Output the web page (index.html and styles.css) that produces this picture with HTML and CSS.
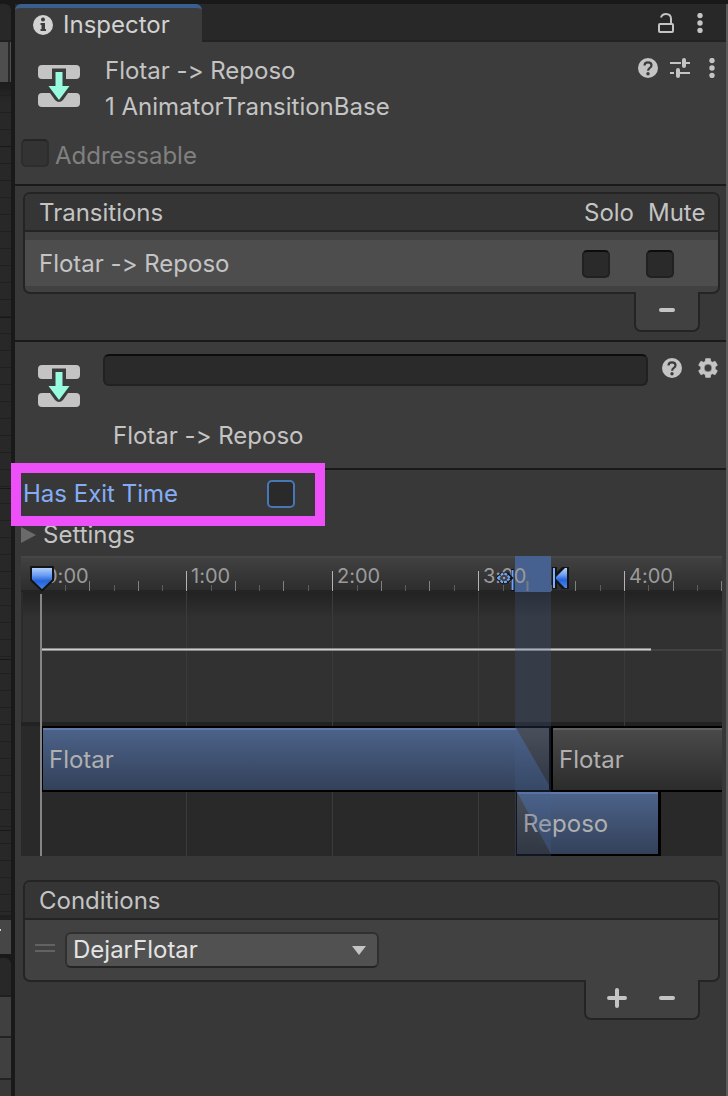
FILE: index.html
```html
<!DOCTYPE html>
<html lang="en">
<head>
<meta charset="utf-8">
<title>Inspector</title>
<link rel="stylesheet" href="styles.css">
</head>
<body>
<svg width="0" height="0" class="defs" aria-hidden="true">
  <defs>
    <symbol id="transition" viewBox="0 0 42 42">
      <path fill="#c4c4c4" d="M4 0H14V14H4Q0 14 0 10V4Q0 0 4 0ZM28 0H38Q42 0 42 4V10Q42 14 38 14H28ZM14 0H28V3.500H14ZM4 28H12L17 35Q21 39 25 35L30 28H38Q42 28 42 32V38Q42 42 38 42H4Q0 42 0 38V32Q0 28 4 28Z"/>
      <path fill="#98fbe0" d="M17.500 7H24.500V21H31.500L21 35L10.500 21H17.500Z"/>
    </symbol>
    <symbol id="help" viewBox="0 0 20 20">
      <circle cx="10" cy="10" r="10" fill="#c4c4c4"/>
      <path d="M6.500 7.500Q6.500 4.300 10 4.300Q13.500 4.300 13.500 7.200Q13.500 8.700 11.800 9.900Q10.100 11 10.100 12.800" fill="none" stroke="#3c3c3c" stroke-width="2.200"/>
      <circle cx="10" cy="15.800" r="1.700" fill="#3c3c3c"/>
    </symbol>
    <symbol id="dots" viewBox="0 0 6 20">
      <g fill="#c4c4c4"><circle cx="3" cy="2.600" r="2.700"/><circle cx="3" cy="10" r="2.700"/><circle cx="3" cy="17.400" r="2.700"/></g>
    </symbol>
    <symbol id="minus" viewBox="0 0 20 20"><path d="M4 10H16" stroke="#c4c4c4" stroke-width="4" stroke-linecap="round"/></symbol>
    <symbol id="plus" viewBox="0 0 20 20"><path d="M2 10H18M10 2V18" stroke="#c4c4c4" stroke-width="4" stroke-linecap="round"/></symbol>
  </defs>
</svg>
<div class="app">
  <div class="neighbor" aria-hidden="true">
    <div class="neighbor-tab"></div>
    <div class="neighbor-tool"></div>
    <div class="neighbor-grid"></div>
    <div class="neighbor-bar"></div>
    <div class="neighbor-tab"></div>
    <div class="neighbor-row"></div>
    <div class="neighbor-row"></div>
    <div class="neighbor-rest"></div>
  </div>
  <main class="inspector">
    <div class="tabbar">
      <div class="tab">
        <svg width="20" height="20" viewBox="0 0 20 20"><circle cx="10" cy="10" r="10" fill="#d2d2d2"/><circle cx="10" cy="4.500" r="2" fill="#3c3c3c"/><path d="M7.500 8H12V14H13V16H7.500V14H8.500V10H7.500Z" fill="#3c3c3c"/></svg>
        <span>Inspector</span>
      </div>
      <div class="tab-actions">
        <button class="icon-button" aria-label="Lock"><svg width="16" height="20" viewBox="0 0 16 20" fill="none" stroke="#c4c4c4" stroke-width="2"><rect x="1" y="11" width="14" height="8" rx="1"/><path d="M3 4.500Q4 1 8 1Q13 1 13 6V11"/></svg></button>
        <button class="icon-button" aria-label="Tab menu"><svg width="6" height="20"><use href="#dots"/></svg></button>
      </div>
    </div>

    <header class="object">
      <div class="object-main">
        <svg class="object-icon" width="42" height="42"><use href="#transition"/></svg>
        <div class="object-title">
          <div>Flotar -&gt; Reposo</div>
          <div>1 AnimatorTransitionBase</div>
        </div>
        <div class="object-actions">
          <button class="icon-button" aria-label="Help"><svg width="20" height="20"><use href="#help"/></svg></button>
          <button class="icon-button" aria-label="Presets"><svg width="20" height="20" viewBox="0 0 20 20"><path d="M0 5H11M16 5H20M0 15H4M9 15H20" stroke="#c4c4c4" stroke-width="2"/><path d="M14 2V8M8 12V18" stroke="#c4c4c4" stroke-width="4" stroke-linecap="round"/></svg></button>
          <button class="icon-button" aria-label="Component menu"><svg width="6" height="20"><use href="#dots"/></svg></button>
        </div>
      </div>
      <label class="addressable"><input type="checkbox" class="check" disabled><span>Addressable</span></label>
    </header>

    <section class="transitions">
      <div class="list">
        <div class="list-head"><span class="grow">Transitions</span><span class="col">Solo</span><span class="col">Mute</span></div>
        <div class="list-body">
          <div class="transition-row">
            <span class="grow">Flotar -&gt; Reposo</span>
            <span class="col"><input type="checkbox" class="check" aria-label="Solo"></span>
            <span class="col"><input type="checkbox" class="check" aria-label="Mute"></span>
          </div>
        </div>
      </div>
      <div class="list-foot">
        <button class="foot-button" aria-label="Remove transition"><svg width="20" height="20"><use href="#minus"/></svg></button>
      </div>
    </section>

    <section class="selected">
      <svg class="selected-icon" width="42" height="42"><use href="#transition"/></svg>
      <div class="selected-fields">
        <input type="text" class="name-input" aria-label="Transition name">
        <div class="selected-name">Flotar -&gt; Reposo</div>
      </div>
      <div class="selected-actions">
        <button class="icon-button" aria-label="Help"><svg width="20" height="20"><use href="#help"/></svg></button>
        <button class="icon-button" aria-label="Options"><svg width="20" height="20" viewBox="2 2 20 20"><path fill="#c4c4c4" stroke="#c4c4c4" stroke-width=".6" d="M19.140 12.940c.04-.3.06-.61.06-.94 0-.32-.02-.64-.07-.94l2.030-1.580c.18-.14.23-.41.12-.61l-1.920-3.320c-.12-.22-.37-.29-.59-.22l-2.390.96c-.5-.38-1.030-.7-1.620-.94L14.400 2.810c-.04-.24-.24-.41-.48-.41h-3.840c-.24 0-.43.17-.47.41L9.250 5.350c-.59.24-1.130.57-1.620.94l-2.390-.96c-.22-.08-.47 0-.59.22L2.740 8.870c-.12.21-.08.47.12.61l2.030 1.580c-.05.3-.09.63-.09.94s.02.64.07.94l-2.030 1.580c-.18.14-.23.41-.12.61l1.920 3.320c.12.22.37.29.59.22l2.390-.96c.5.38 1.030.7 1.620.94l.36 2.540c.05.24.24.41.48.41h3.840c.24 0 .44-.17.47-.41l.36-2.540c.59-.24 1.130-.56 1.620-.94l2.390.96c.22.08.47 0 .59-.22l1.920-3.320c.12-.22.07-.47-.12-.61zM12 15.900A3.900 3.900 0 1 1 12 8.100A3.900 3.900 0 0 1 12 15.900z"/></svg></button>
      </div>
    </section>

    <section class="settings">
      <div class="exit-time">
        <label for="exit">Has Exit Time</label>
        <input type="checkbox" id="exit" class="check check-focus">
        <div class="highlight"></div>
      </div>
      <details class="foldout"><summary>Settings</summary></details>

      <svg class="timeline" role="img" aria-label="Transition timeline">
        <defs>
          <linearGradient id="ruler" x2="0" y2="1"><stop offset="0" stop-color="#424242"/><stop offset="1" stop-color="#2c2c2c"/></linearGradient>
          <linearGradient id="shade" x2="0" y2="1"><stop offset="0" stop-color="#222222"/><stop offset="1" stop-color="#313131"/></linearGradient>
          <linearGradient id="blue" x2="0" y2="1"><stop offset="0" stop-color="#4c638a"/><stop offset="1" stop-color="#33415a"/></linearGradient>
          <linearGradient id="gray" x2="0" y2="1"><stop offset="0" stop-color="#4b4b4b"/><stop offset="1" stop-color="#2c2c2c"/></linearGradient>
          <linearGradient id="pin" x2="0" y2="1"><stop offset="0" stop-color="#b9d5ff"/><stop offset=".35" stop-color="#6c9df0"/><stop offset=".6" stop-color="#2463dc"/><stop offset="1" stop-color="#4f8bf0"/></linearGradient>
        </defs>
        <rect width="100%" height="36" fill="url(#ruler)"/>
        <rect width="100%" height="2" fill="#464646"/>
        <rect y="34" width="100%" height="2" fill="#242424"/>
        <rect y="36" width="100%" height="132" fill="#313131"/>
        <rect y="36" width="100%" height="26" fill="url(#shade)"/>
        <rect y="36" width="2" height="132" fill="#2b2b2b"/>
        <rect y="166" width="100%" height="4" fill="#222222"/>
        <rect y="170" width="100%" height="130" fill="#292929"/>
        <path d="M165.500 36V300M311.500 36V300M457.500 36V300M603.500 36V300" stroke="#3b3b3b"/>
        <path d="M165.500 15V35M311.500 15V35M457.500 15V35M603.500 15V35" stroke="#b4b4b4"/>
        <path d="M68.500 25V35M117.500 25V35M214.500 25V35M262.500 25V35M360.500 25V35M408.500 25V35M554.500 25V35M652.500 25V35M700.500 25V35" stroke="#808080"/>
        <path d="M44.500 29V35M93.500 29V35M141.500 29V35M190.500 29V35M238.500 29V35M287.500 29V35M336.500 29V35M384.500 29V35M433.500 29V35M482.500 29V35M530.500 29V35M579.500 29V35M627.500 29V35M676.500 29V35" stroke="#5c5c5c"/>
        <rect x="494" width="36" height="36" fill="#46618f"/>
        <path d="M506.500 25V35" stroke="#777b84" stroke-width="2"/>
        <g class="times">
          <text x="24" y="27">0:00</text><text x="170" y="27">1:00</text><text x="316" y="27">2:00</text><text x="462" y="27">3:00</text><text x="608" y="27">4:00</text>
        </g>
        <path d="M630 94H1000" stroke="#424242" stroke-width="2"/>
        <path d="M20 93.500H630" stroke="#8b8888" stroke-width="3"/>
        <path d="M20 93.500H630" stroke="#d0cccc"/>

        <rect x="21" y="170" width="509" height="66" fill="#000"/>
        <rect x="22" y="172" width="506" height="62" fill="url(#blue)"/>
        <rect x="22" y="172" width="506" height="2" fill="#6179aa"/>
        <path d="M495 172H528V229Z" fill="url(#gray)"/>
        <rect x="530" y="170" width="100%" height="66" fill="#000"/>
        <rect x="532" y="172" width="100%" height="62" fill="url(#gray)"/>
        <rect x="532" y="172" width="100%" height="2" fill="#625f62"/>
        <rect x="495" y="235" width="145" height="65" fill="#000"/>
        <rect x="496" y="236" width="141" height="62" fill="url(#blue)"/>
        <rect x="496" y="236" width="141" height="2" fill="#6179aa"/>
        <path d="M496 236L530 298H496Z" fill="url(#gray)"/>
        <g class="clips">
          <text x="28" y="212">Flotar</text><text x="538" y="212">Flotar</text><text x="502" y="276">Reposo</text>
        </g>
        <rect x="494" y="36" width="36" height="264" fill="#46618f" opacity=".24"/>
        <path d="M20 38V300" stroke="#858585" stroke-width="2"/>
        <path d="M10 11H32V24L21 34.500L10 24Z" fill="url(#pin)" stroke="#141414" stroke-width="2" stroke-linejoin="round"/>
        <path d="M490 13H493V35H490Z" fill="#101010"/><path d="M491.500 14V34" stroke="#70a4ff" stroke-width="2"/>
        <path d="M478 22L481 19H486L489 22L486 25H481Z" fill="#333" stroke="#141414" stroke-width="5"/>
        <path d="M477 22L481 18H485L489 22L485 26H481Z" fill="#444" stroke="#70a4ff" stroke-width="2" stroke-dasharray="3 1"/><circle cx="483" cy="22" r="1" fill="#9cc0ff"/>
        <path d="M531 11H536V16L541 11H548V33H541L536 27V33H531Z" fill="#141414"/>
        <path d="M533 12V32" stroke="#7eaeff" stroke-width="2"/><path d="M546 12V32H544L535 23V21L544 12Z" fill="url(#pin)"/>
      </svg>
    </section>

    <section class="conditions">
      <div class="list">
        <div class="list-head">Conditions</div>
        <div class="list-body condition-row">
          <span class="handle"></span>
          <div class="select-wrap">
            <select class="select" aria-label="Condition parameter"><option>DejarFlotar</option></select>
            <svg class="select-arrow" width="14" height="9" viewBox="0 0 14 9"><path d="M0 0H14L7 9Z" fill="#c4c4c4"/></svg>
          </div>
        </div>
      </div>
      <div class="list-foot">
        <button class="foot-button" aria-label="Add condition"><svg width="20" height="20"><use href="#plus"/></svg></button>
        <button class="foot-button" aria-label="Remove condition"><svg width="20" height="20"><use href="#minus"/></svg></button>
      </div>
    </section>
  </main>
</div>
</body>
</html>
```
FILE: styles.css
```css
* { box-sizing: border-box; }
body {
  margin: 0;
  background: #191919;
  color: #c4c4c4;
  font: 380 24px/32px Inter, "Liberation Sans", sans-serif;
  font-feature-settings: "calt" 0;
}
svg { display: block; flex: none; }
.defs { position: absolute; }
.app { display: flex; gap: 4px; min-height: 100vh; padding-top: 4px; }

.neighbor { flex: none; width: 11px; display: flex; flex-direction: column; }
.neighbor-tab { height: 38px; background: #282828; border-bottom: 2px solid #202020; border-radius: 0 6px 0 0; }
.neighbor-tool { height: 40px; background: linear-gradient(90deg, #4e4e4e 8px, #282828 8px 10px, #4e4e4e 10px); }
.neighbor-grid {
  flex: 1;
  background:
    repeating-linear-gradient(#0000 0 64px, #181818 64px 65px, #0000 65px 171px),
    repeating-linear-gradient(#0000 0 13px, #202020 13px 14px, #0000 14px 17px),
    linear-gradient(#1c1c1c, #282828 20px);
}
.neighbor-bar { height: 39px; padding-top: 9px; background: #464646; border-top: 5px solid #202020; }
.neighbor-bar::before { content: ""; display: block; width: 1px; height: 2px; background: #d2d2d2; }
.neighbor-bar + .neighbor-tab { margin-top: 4px; height: 39px; }
.neighbor-row { height: 41px; background: #404040; border-bottom: 2px solid #232323; }
.neighbor-row + .neighbor-row { height: 42px; }
.neighbor-rest { height: 16px; background: #383838; }

.inspector { flex: 1; min-width: 0; background: #383838; border-right: 2px solid #5a5a5a; }
.icon-button, .foot-button { display: flex; align-items: center; justify-content: center; padding: 0; border: 0; background: none; }

.tabbar { display: flex; justify-content: space-between; height: 38px; background: linear-gradient(#282828 36px, #232323 36px); }
.tab { display: flex; align-items: center; gap: 10px; padding: 0 32px 0 18px; background: #3c3c3c; border-top: 4px solid #3a5f8f; border-radius: 6px 6px 0 0; color: #d2d2d2; }
.tab-actions { display: flex; align-items: center; gap: 23px; padding-right: 23px; }

.object { height: 144px; background: #3c3c3c; border-bottom: 2px solid #1a1a1a; padding: 11px 11px 0 6px; }
.object-main { display: flex; }
.object-icon { margin: 12px 25px 0 17px; }
.object-title { flex: 1; line-height: 36px; }
.object-actions { display: flex; gap: 12px; height: 20px; margin-top: 5px; }
.object-actions .icon-button:last-child { margin-left: 7px; }
.addressable { display: flex; align-items: flex-start; gap: 6px; margin-top: 14px; line-height: 34px; color: #808080; }

.check { appearance: none; display: block; flex: none; width: 28px; height: 28px; margin: 0; background: #2a2a2a; border: 2px solid #212121; border-top-color: #0d0d0d; border-radius: 5px; }
.check:disabled { background: #333333; border-color: #2d2d2d; border-top-color: #252525; }
.check-focus, .check-focus:focus { border-color: #4678b8; }

.transitions { height: 156px; padding: 6px 6px 0 8px; border-bottom: 2px solid #1a1a1a; }
.list { border: 2px solid #242424; border-radius: 7px; background: #414141; }
.list-head { display: flex; height: 38px; padding: 1px 0 0 14px; line-height: 36px; background: #353535; border-bottom: 2px solid #242424; border-radius: 5px 5px 0 0; }
.grow { flex: 1; }
.col { width: 64px; }
.transitions .col:last-child { width: 70px; }
.transitions .list-body { padding: 8px 0 6px; }
.transition-row { display: flex; align-items: center; height: 46px; padding: 1px 0 0 14px; background: #4d4d4d; }
.transition-row .grow { margin-right: -2px; }
.transition-row .col:last-child { width: 72px; }
.list-foot { position: relative; display: flex; width: fit-content; height: 40px; margin: -2px 20px 0 auto; background: #414141; border: 2px solid #242424; border-top: 0; border-radius: 0 0 7px 7px; }
.foot-button { width: 62px; height: 36px; }
.foot-button + .foot-button { width: 38px; margin-right: 12px; }

.selected { display: flex; height: 128px; padding: 12px 8px 0 23px; background: #3c3c3c; border-bottom: 2px solid #1a1a1a; }
.selected-icon { margin: 11px 23px 0 0; }
.selected-fields { flex: 1; min-width: 0; }
.name-input { display: block; width: 100%; height: 32px; padding: 0 6px; background: #2a2a2a; border: 2px solid #212121; border-top-color: #0d0d0d; border-radius: 6px; color: inherit; font: inherit; }
.selected-name { margin: 34px 0 0 10px; }
.selected-actions { display: flex; align-items: center; gap: 16px; height: 28px; margin-left: 14px; }

.settings { padding: 0 4px 0 6px; }
.exit-time { position: relative; display: flex; align-items: center; height: 48px; padding-left: 2px; color: #85adf5; }
.exit-time label { width: 244px; line-height: 34px; }
.highlight { position: absolute; left: -10px; top: -7px; width: 314px; height: 63px; border: 10px solid #ed50f8; pointer-events: none; }
.foldout summary { display: flex; align-items: center; gap: 7px; height: 34px; margin-bottom: 4px; list-style: none; }
.foldout summary::before { content: ""; border: solid transparent; border-width: 8px 0 8px 15px; border-left-color: #6a6a6a; }
.timeline { width: 100%; height: 300px; }
.times { fill: #9b9b9b; font-size: 20px; }
.clips { fill: #b0b0b0; }

.conditions { padding: 24px 6px 0 8px; }
.condition-row { display: flex; align-items: center; height: 60px; padding-left: 10px; }
.handle { width: 20px; height: 8px; margin: -4px 10px 0 0; border: solid #626262; border-width: 2px 0; }
.select-wrap { position: relative; width: 314px; }
.select { appearance: none; display: block; width: 100%; height: 36px; padding: 0 6px; background: #515151; border: 2px solid #303030; border-bottom-color: #242424; border-radius: 6px; color: #e4e4e4; font: inherit; }
.select-arrow { position: absolute; right: 13px; top: 14px; pointer-events: none; }
```
